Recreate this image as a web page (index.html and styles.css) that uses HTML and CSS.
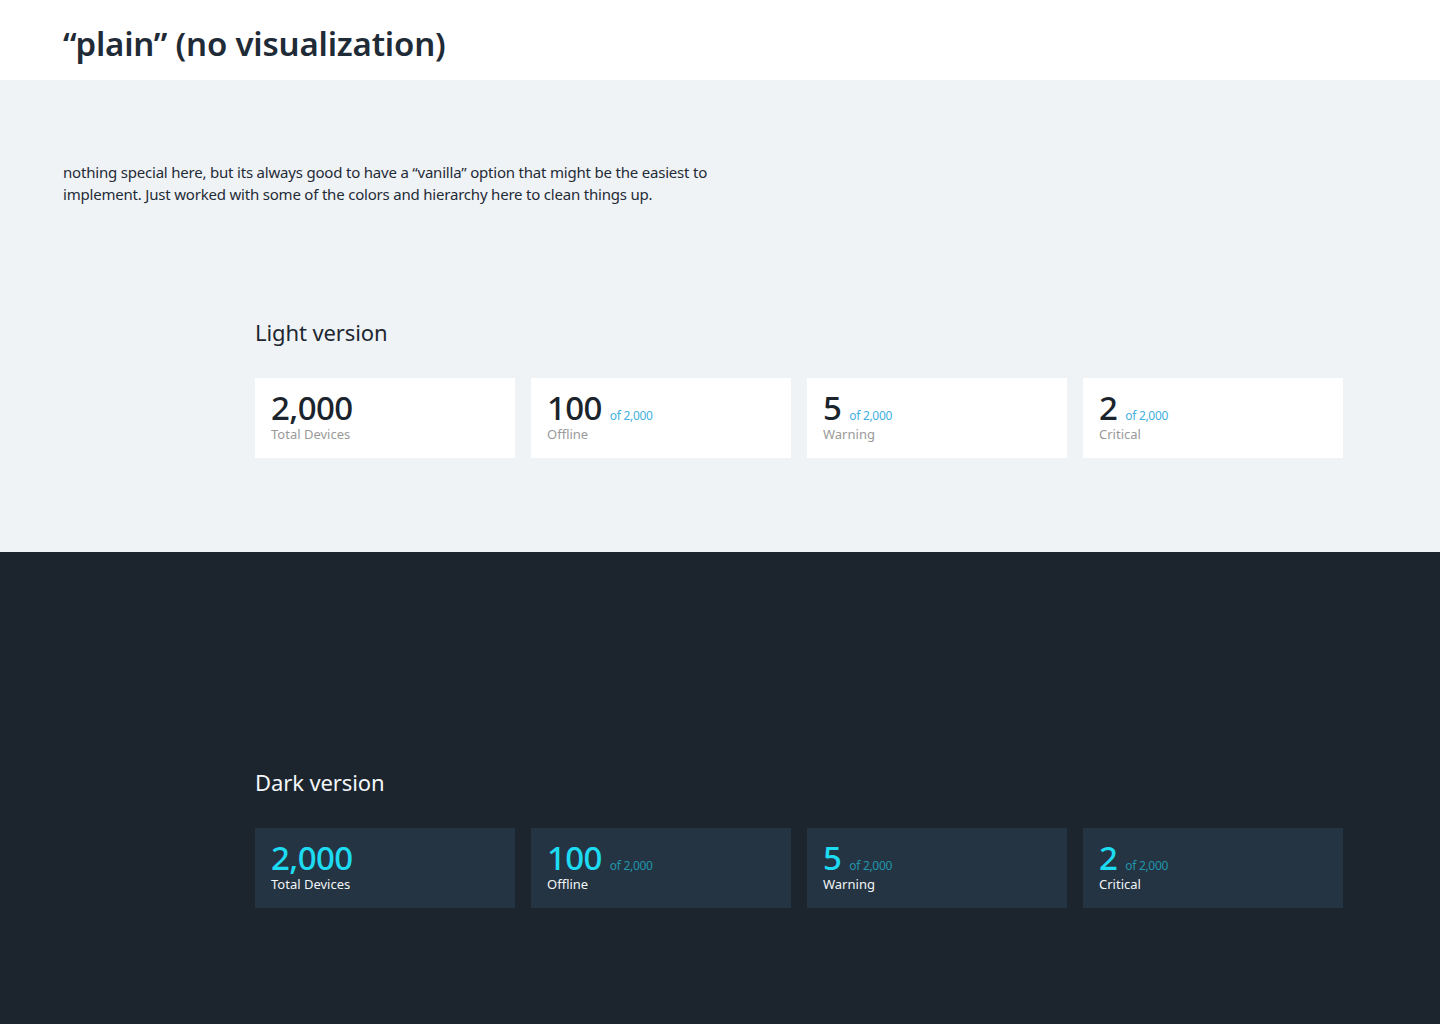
FILE: index.html
```html
<!DOCTYPE html>
<html>
<head>
<meta charset="utf-8">
<link rel="stylesheet" href="styles.css">
</head>
<body>
<header class="top">
  <h1 class="title">“plain” (no visualization)</h1>
</header>
<section class="light">
  <p class="intro">nothing special here, but its always good to have a “vanilla” option that might be the easiest to<br>implement. Just worked with some of the colors and hierarchy here to clean things up.</p>
  <div class="group">
    <h2 class="group-title">Light version</h2>
    <div class="cards">
      <div class="card"><div class="num-row"><span class="num">2,000</span></div><div class="label">Total Devices</div></div>
      <div class="card"><div class="num-row"><span class="num">100</span><span class="of">of 2,000</span></div><div class="label">Offline</div></div>
      <div class="card"><div class="num-row"><span class="num">5</span><span class="of">of 2,000</span></div><div class="label">Warning</div></div>
      <div class="card"><div class="num-row"><span class="num">2</span><span class="of">of 2,000</span></div><div class="label">Critical</div></div>
    </div>
  </div>
</section>
<section class="dark">
  <div class="group">
    <h2 class="group-title">Dark version</h2>
    <div class="cards">
      <div class="card"><div class="num-row"><span class="num">2,000</span></div><div class="label">Total Devices</div></div>
      <div class="card"><div class="num-row"><span class="num">100</span><span class="of">of 2,000</span></div><div class="label">Offline</div></div>
      <div class="card"><div class="num-row"><span class="num">5</span><span class="of">of 2,000</span></div><div class="label">Warning</div></div>
      <div class="card"><div class="num-row"><span class="num">2</span><span class="of">of 2,000</span></div><div class="label">Critical</div></div>
    </div>
  </div>
</section>
</body>
</html>
```
FILE: styles.css
```css
* { box-sizing: border-box; }
html, body { margin: 0; padding: 0; }
body { font-family: "Noto Sans", "Open Sans", sans-serif; color: #1d2731; background: #1c252e; }
.top { background: #fff; height: 80px; padding: 0 63px; display: flex; align-items: center; }
.title { margin: 0; font-size: 33px; font-weight: 600; color: #1f2b36; letter-spacing: -0.2px; line-height: 1; padding-top: 6px; }
.light { background: #eff3f6; height: 472px; padding: 81px 63px 0; }
.intro { margin: 0; font-size: 15px; line-height: 22px; color: #1f2b36; letter-spacing: -0.2px; }
.group { padding-left: 192px; }
.light .group { margin-top: 112px; }
.group-title { margin: 0; font-size: 22px; font-weight: 400; line-height: 30px; letter-spacing: -0.1px; }
.cards { display: grid; grid-template-columns: repeat(4, 260px); gap: 16px; margin-top: 31px; }
.card { height: 80px; padding: 13px 16px 0; background: #fff; }
.num-row { display: flex; align-items: baseline; height: 34px; }
.num { font-size: 33px; font-weight: 500; line-height: 34px; letter-spacing: -0.6px; color: #1b232c; }
.of { font-size: 12px; margin-left: 8px; color: #3fb0e0; letter-spacing: -0.3px; }
.label { font-size: 13px; line-height: 16px; color: #9a9a9a; margin-top: 1px; }
.dark { height: 472px; padding: 215px 63px 0; }
.dark .cards { margin-top: 31px; }
.dark .group-title { color: #f4f7f9; }
.dark .card { background: #243442; }
.dark .num { color: #1ddcf2; }
.dark .of { color: #2294ac; }
.dark .label { color: #f2f5f7; }
```
